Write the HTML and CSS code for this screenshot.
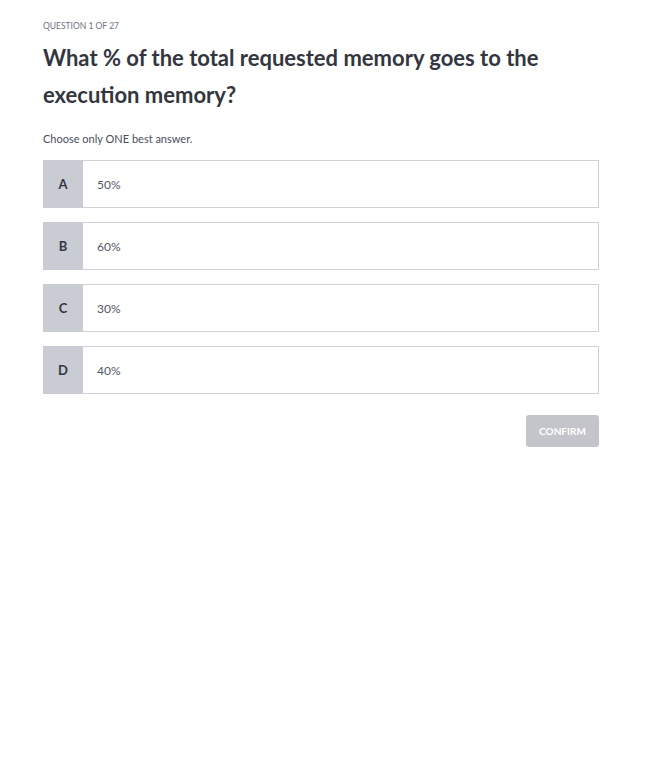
FILE: index.html
```html
<!DOCTYPE html>
<html>
<head>
<meta charset="utf-8">
<link rel="stylesheet" href="styles.css">
</head>
<body>
<main class="quiz">
  <div class="counter">QUESTION 1 OF 27</div>
  <h1 class="question">What % of the total requested memory goes to the execution memory?</h1>
  <p class="hint">Choose only ONE best answer.</p>
  <div class="options">
    <div class="option"><span class="letter">A</span><span class="text">50%</span></div>
    <div class="option"><span class="letter">B</span><span class="text">60%</span></div>
    <div class="option"><span class="letter">C</span><span class="text">30%</span></div>
    <div class="option"><span class="letter">D</span><span class="text">40%</span></div>
  </div>
  <div class="actions"><button class="confirm">CONFIRM</button></div>
</main>
</body>
</html>
```
FILE: styles.css
```css
body {
  margin: 0;
  background: #fff;
  font-family: Lato, "Open Sans", sans-serif;
  color: #3b3e4a;
}
.quiz {
  width: 556px;
  padding: 20px 0 0 43px;
}
.counter {
  font-size: 8.5px;
  color: #6f7280;
  line-height: 12px;
}
.question {
  margin: 7px 0 0;
  font-size: 22px;
  font-weight: 700;
  line-height: 37px;
  color: #33363f;
}
.hint {
  margin: 18px 0 0;
  font-size: 11px;
  line-height: 16px;
  color: #4a4d5a;
}
.options {
  margin-top: 13px;
  display: flex;
  flex-direction: column;
  gap: 14px;
}
.option {
  display: flex;
  height: 48px;
  box-sizing: border-box;
  border: 1px solid #cfd0da;
  background: #fff;
}
.letter {
  width: 40px;
  background: #caccd4;
  display: flex;
  align-items: center;
  justify-content: center;
  font-size: 13px;
  font-weight: 700;
  color: #33363f;
  margin: -1px 0 -1px -1px;
}
.text {
  display: flex;
  align-items: center;
  padding-left: 14px;
  font-size: 12px;
  color: #545766;
}
.actions {
  display: flex;
  justify-content: flex-end;
  margin-top: 21px;
}
.confirm {
  width: 73px;
  height: 32px;
  border: none;
  border-radius: 3px;
  background: #c4c5ca;
  color: #fff;
  font-family: Lato, "Open Sans", sans-serif;
  font-size: 10px;
  font-weight: 700;
  padding: 0;
}
```
